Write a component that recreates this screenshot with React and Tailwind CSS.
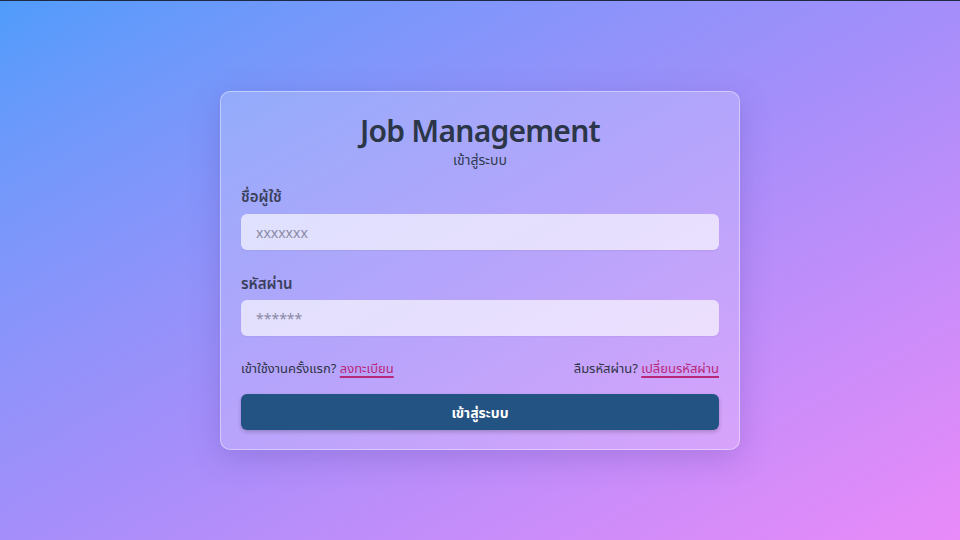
export default function App() {
  return (
    <div
      className="w-[960px] h-[540px] flex items-center justify-center border-t border-[#1e2a44] bg-gradient-to-br from-[#4f9cfb] via-[#a48efa] to-[#e98af9]"
      style={{ fontFamily: '"Noto Sans", "Noto Sans Thai", sans-serif' }}
    >
      <div className="w-[520px] rounded-[10px] border border-white/40 bg-white/20 shadow-[0_8px_30px_rgba(80,60,160,0.25)] px-5 pt-[20px] pb-[19px] text-[#2d3a4d]">
        <h1 className="text-center text-[30px] leading-[38px] font-semibold tracking-tight text-[#2b3648]">Job Management</h1>
        <p className="text-center text-[14px] leading-[19px] text-[#2f3a4f]">เข้าสู่ระบบ</p>

        <label className="block mt-[16px] text-[15px] leading-[22px] font-semibold text-[#3a3f5c]">ชื่อผู้ใช้</label>
        <input
          placeholder="xxxxxxx"
          className="mt-[7px] w-full h-[36px] rounded-[6px] bg-white/65 px-[15px] text-[14px] placeholder:text-[#8a8aa4] outline-none shadow-[0_1px_2px_rgba(0,0,0,0.05)]"
        />

        <label className="block mt-[22px] text-[15px] leading-[22px] font-semibold text-[#3a3f5c]">รหัสผ่าน</label>
        <input
          type="password"
          placeholder="******"
          className="mt-[6px] w-full h-[36px] rounded-[6px] bg-white/65 px-[15px] text-[14px] placeholder:text-[#8a8aa4] outline-none shadow-[0_1px_2px_rgba(0,0,0,0.05)]"
        />

        <div className="mt-[22px] flex justify-between text-[13px] leading-[20px] text-[#2f3448]">
          <span>
            เข้าใช้งานครั้งแรก? <a href="#" className="text-[#b7287a] underline decoration-2 underline-offset-[3px]">ลงทะเบียน</a>
          </span>
          <span>
            ลืมรหัสผ่าน? <a href="#" className="text-[#b7287a] underline decoration-2 underline-offset-[3px]">เปลี่ยนรหัสผ่าน</a>
          </span>
        </div>

        <button className="mt-[16px] w-full h-[36px] rounded-[6px] bg-[#235383] text-white text-[14px] font-bold shadow-[0_2px_4px_rgba(0,0,0,0.2)]">
          เข้าสู่ระบบ
        </button>
      </div>
    </div>
  );
}
